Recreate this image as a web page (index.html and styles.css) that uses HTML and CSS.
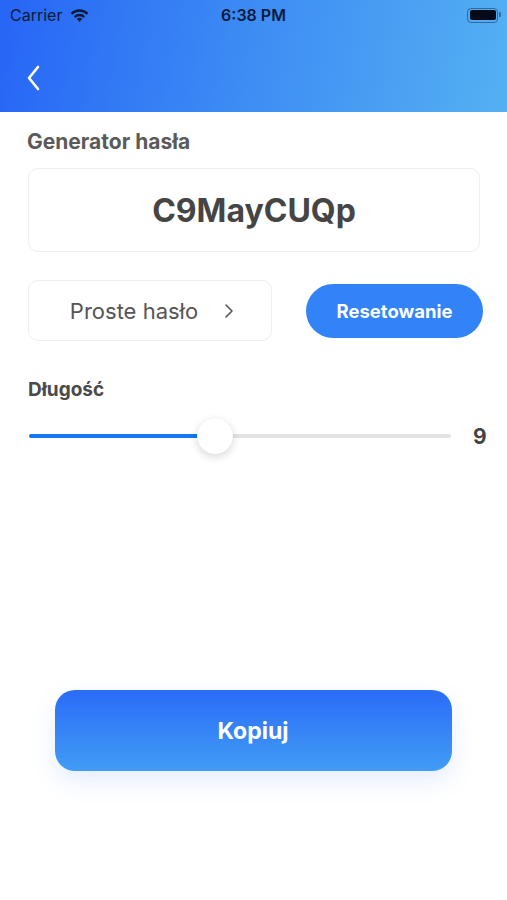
FILE: index.html
```html
<!DOCTYPE html>
<html lang="pl">
<head>
	<meta charset="UTF-8">
	<meta name="viewport" content="width=device-width, initial-scale=1.0">
	<title>Generator hasła</title>
	<link rel="stylesheet" href="styles.css">
</head>
<body>
	<div class="header">
		<div class="status">
			<div class="status-left">
				<span>Carrier</span>
				<svg class="wifi" width="21" height="15" viewBox="0 0 20 14">
					<path d="M10 13.2 L7.4 10.4 A3.8 3.8 0 0 1 12.6 10.4 Z" fill="#0b1a3a"/>
					<path d="M4.6 7.6 A7.6 7.6 0 0 1 15.4 7.6 L13.8 9.3 A5.3 5.3 0 0 0 6.2 9.3 Z" fill="#0b1a3a"/>
					<path d="M1.6 4.6 A11.8 11.8 0 0 1 18.4 4.6 L16.8 6.3 A9.5 9.5 0 0 0 3.2 6.3 Z" fill="#0b1a3a"/>
				</svg>
			</div>
			<span class="time">6:38 PM</span>
			<div class="battery"><div class="battery-fill"></div></div>
		</div>
		<div class="nav">
			<svg class="back" width="16" height="26" viewBox="0 0 16 26">
				<path d="M12 2 L3 13 L12 24" fill="none" stroke="#fff" stroke-width="2.6" stroke-linecap="round" stroke-linejoin="round"/>
			</svg>
		</div>
	</div>

	<div class="content">
		<h2 class="title">Generator hasła</h2>
		<div class="password">C9MayCUQp</div>

		<div class="options">
			<div class="mode">
				<span>Proste hasło</span>
				<svg width="10" height="16" viewBox="0 0 10 16">
					<path d="M2 2 L8 8 L2 14" fill="none" stroke="#555" stroke-width="1.6" stroke-linecap="round" stroke-linejoin="round"/>
				</svg>
			</div>
			<button class="reset">Resetowanie</button>
		</div>

		<h3 class="label">Długość</h3>
		<div class="slider-row">
			<div class="slider">
				<div class="track"></div>
				<div class="fill" style="width: 44%"></div>
				<div class="thumb" style="left: 44%"></div>
			</div>
			<span class="value">9</span>
		</div>
	</div>

	<div class="bottom">
		<button class="copy">Kopiuj</button>
	</div>
</body>
</html>
```

FILE: styles.css
```css
body {
	margin: 0;
	font-family: "Inter", "Liberation Sans", Arial, sans-serif;
	background-color: #fff;
	width: 507px;
	min-height: 900px;
}

.header {
	height: 112px;
	background: linear-gradient(100deg, #2765f6 0%, #3d8df4 50%, #55b0f2 100%);
}

.status {
	height: 30px;
	display: flex;
	align-items: center;
	justify-content: space-between;
	padding: 0 8px 0 10px;
	color: #0b1a3a;
	position: relative;
}

.status-left {
	display: flex;
	align-items: center;
	gap: 7px;
	font-size: 16px;
}

.time {
	position: absolute;
	left: 0;
	right: 0;
	text-align: center;
	font-weight: 600;
	font-size: 16px;
}

.battery {
	width: 26px;
	height: 10px;
	border: 1.5px solid rgba(11, 26, 58, 0.45);
	border-radius: 4px;
	padding: 1.5px;
	position: relative;
	margin-right: 1px;
}

.battery::after {
	content: "";
	position: absolute;
	right: -4px;
	top: 3px;
	width: 2px;
	height: 5px;
	background: rgba(11, 26, 58, 0.45);
	border-radius: 0 1px 1px 0;
}

.battery-fill {
	width: 100%;
	height: 100%;
	background: #050a18;
	border-radius: 2px;
}

.nav {
	height: 82px;
	display: flex;
	align-items: center;
	padding-left: 26px;
	padding-top: 14px;
	box-sizing: border-box;
}

.content {
	padding: 0 27px 0 28px;
}

.title {
	margin: 17px 0 0 -1px;
	font-size: 21px;
	font-weight: 700;
	color: #5a5a5a;
	line-height: 26px;
}

.password {
	margin-top: 13px;
	height: 84px;
	border: 1px solid #eeeeee;
	border-radius: 10px;
	display: flex;
	align-items: center;
	justify-content: center;
	font-size: 32px;
	font-weight: 700;
	color: #454545;
	box-sizing: border-box;
}

.options {
	margin-top: 28px;
	display: flex;
	align-items: center;
	justify-content: space-between;
}

.mode {
	width: 244px;
	height: 61px;
	box-sizing: border-box;
	border: 1px solid #eeeeee;
	border-radius: 10px;
	display: flex;
	align-items: center;
	justify-content: center;
	gap: 26px;
	font-size: 22px;
	color: #555;
	padding-left: 4px;
}

.reset {
	width: 177px;
	height: 54px;
	margin-right: -3px;
	border: none;
	border-radius: 27px;
	background-color: #3183f7;
	color: #fff;
	font-family: inherit;
	font-size: 18.5px;
	font-weight: 700;
}

.label {
	margin: 38px 0 0 0;
	font-size: 19px;
	font-weight: 700;
	color: #4a4a4a;
	line-height: 22px;
}

.slider-row {
	margin-top: 15px;
	display: flex;
	align-items: center;
	height: 40px;
}

.slider {
	position: relative;
	flex-shrink: 0;
	width: 422px;
	height: 40px;
	margin-left: 1px;
}

.track,
.fill {
	position: absolute;
	left: 0;
	top: 18px;
	height: 4px;
	border-radius: 2px;
}

.track {
	width: 100%;
	background: #e3e3e3;
}

.fill {
	background: #1677f0;
}

.thumb {
	position: absolute;
	top: 2px;
	width: 36px;
	height: 36px;
	margin-left: -18px;
	border-radius: 50%;
	background: #fff;
	box-shadow: 0 3px 8px rgba(0, 0, 0, 0.15), 0 0 1px rgba(0, 0, 0, 0.1);
}

.value {
	margin-left: 22px;
	font-size: 21px;
	font-weight: 700;
	color: #444;
}

.bottom {
	margin-top: 234px;
	padding-bottom: 60px;
	display: flex;
	justify-content: center;
}

.copy {
	width: 397px;
	height: 81px;
	margin-right: 1px;
	border: none;
	border-radius: 20px;
	background: linear-gradient(180deg, #2a6cf7 0%, #429cf5 100%);
	box-shadow: 0 10px 24px rgba(66, 130, 240, 0.14);
	color: #fff;
	font-family: inherit;
	font-size: 23px;
	font-weight: 700;
}
```
